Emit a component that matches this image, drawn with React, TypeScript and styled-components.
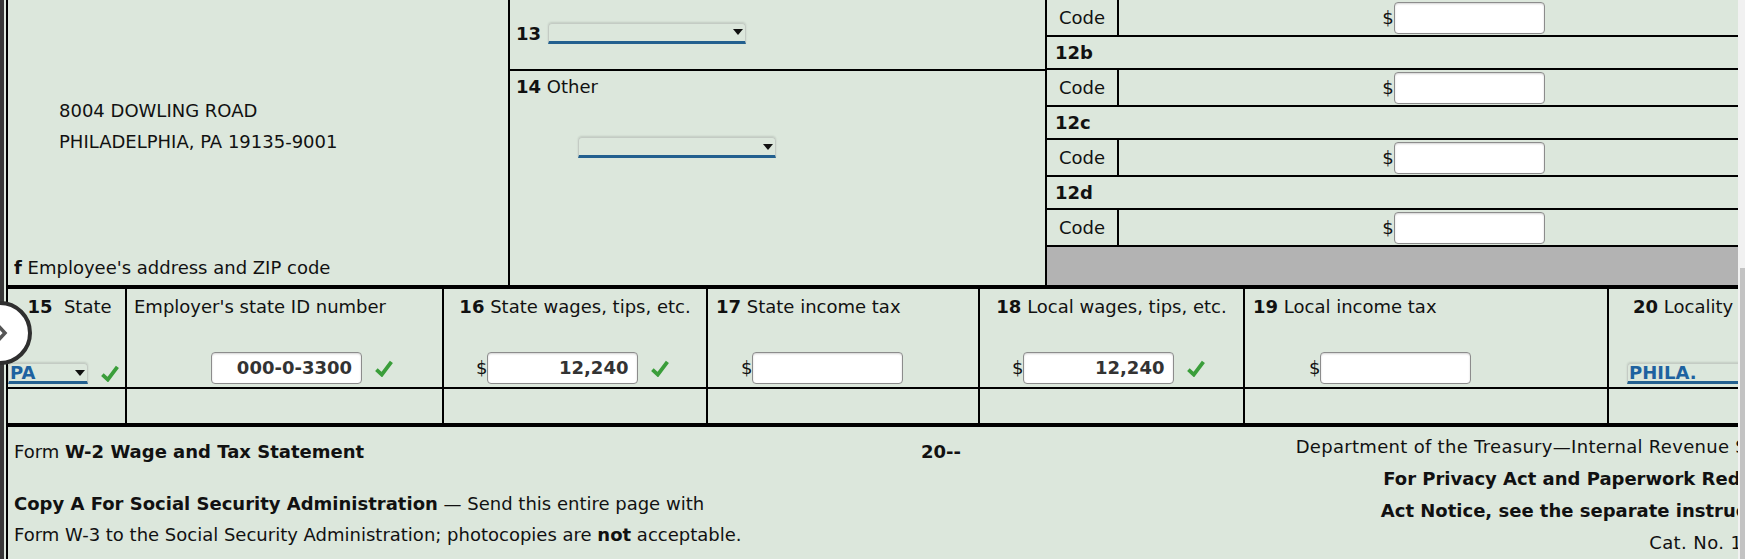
import React from 'react';
import styled, { createGlobalStyle } from 'styled-components';

const FORM_BG = '#dce7dc';
const LINE = '#000';

const GlobalStyle = createGlobalStyle`
  html, body {
    margin: 0;
    padding: 0;
    overflow: hidden;
    background: ${FORM_BG};
  }
  body {
    font-family: Verdana, "DejaVu Sans", sans-serif;
    font-size: 18px;
    color: #111;
  }
`;

const Page = styled.div`
  display: flex;
  width: max-content;
  border-left: 4px solid #383838;
  padding-left: 2px;
  background: ${FORM_BG};
`;

const Form = styled.div`
  width: 1806px;
  border-left: 2px solid ${LINE};
  display: flex;
  flex-direction: column;
`;

// ---------- top block (address / 13 / 14 / 12a-d)

const TopSection = styled.div`
  display: grid;
  grid-template-columns: 502px 537px 1fr;
  height: 285px;
  border-bottom: 4px solid ${LINE};
`;

const AddressCell = styled.div`
  display: flex;
  flex-direction: column;
  border-right: 2px solid ${LINE};
  padding: 95px 0 6px 6px;
`;

const AddressLines = styled.div`
  padding-left: 45px;
  line-height: 31px;
`;

const CellLabel = styled.div`
  margin-top: auto;
  line-height: 22px;
`;

const MiddleCell = styled.div`
  display: flex;
  flex-direction: column;
  border-right: 2px solid ${LINE};
`;

const Box13 = styled.div`
  height: 66px;
  border-bottom: 2px solid ${LINE};
  display: flex;
  align-items: center;
  gap: 7px;
  padding: 0 0 3px 6px;
`;

const Box14 = styled.div`
  flex: 1;
  padding: 5px 6px;
  line-height: 22px;
`;

const Box14Select = styled.div`
  margin: 39px 0 0 62px;
`;

const CodesCell = styled.div`
  display: flex;
  flex-direction: column;
`;

const CodeRow = styled.div`
  height: 35px;
  border-bottom: 2px solid ${LINE};
  display: grid;
  grid-template-columns: 72px 1fr;
`;

const CodeName = styled.div`
  border-right: 2px solid ${LINE};
  display: flex;
  align-items: center;
  justify-content: center;
`;

const CodeAmount = styled.div`
  display: flex;
  align-items: center;
  justify-content: center;
  padding-right: 6px;
`;

const CodeLetterRow = styled.div`
  height: 31px;
  border-bottom: 2px solid ${LINE};
  display: flex;
  align-items: center;
  padding-left: 8px;
  font-weight: bold;
`;

const Shaded = styled.div`
  flex: 1;
  background: #b3b3b3;
`;

// ---------- shared controls

const Num = styled.b`
  font-weight: bold;
`;

const SelectBox = styled.div<{ $w: number }>`
  box-sizing: border-box;
  width: ${(p) => p.$w}px;
  height: 21px;
  flex: none;
  border: 1px solid #c4cbc4;
  border-bottom: 3px solid #23608f;
  border-radius: 4px 4px 0 0;
  box-shadow: 0 -1px 2px rgba(0, 0, 0, 0.12);
  display: flex;
  align-items: center;
  padding-left: 1px;
  color: #1e62a0;
  font-weight: bold;
  line-height: 18px;
  overflow: hidden;
  white-space: nowrap;
`;

const Caret = styled.span`
  margin-left: auto;
  margin-right: 2px;
  width: 0;
  height: 0;
  border-left: 5px solid transparent;
  border-right: 5px solid transparent;
  border-top: 6px solid #111;
`;

const Dollar = styled.span`
  line-height: 32px;
`;

const TextInput = styled.div`
  box-sizing: border-box;
  width: 151px;
  height: 32px;
  flex: none;
  background: #fff;
  border: 1px solid #8c8c8c;
  border-radius: 4px;
  box-shadow: inset 0 1px 2px rgba(0, 0, 0, 0.18);
  padding-right: 9px;
  text-align: right;
  line-height: 30px;
  font-weight: bold;
  color: #333;
`;

const Check = () => (
  <svg width="18" height="17" viewBox="0 0 18 17" style={{ flex: 'none' }}>
    <polyline
      points="1.4,9.6 6.8,14.6 16.4,1.8"
      fill="none"
      stroke="#3a9e3a"
      strokeWidth="3.8"
    />
  </svg>
);

const Select = ({ w, value }: { w: number; value?: string }) => (
  <SelectBox $w={w}>
    {value}
    <Caret />
  </SelectBox>
);

const Money = ({ value }: { value?: string }) => (
  <>
    <Dollar>$</Dollar>
    <TextInput>{value}</TextInput>
  </>
);

// ---------- state / local row

const StateGrid = styled.div`
  display: grid;
  grid-template-columns: 119px 317px 264px 272px 265px 364px 1fr;
  grid-template-rows: 100px 34px;
  border-bottom: 4px solid ${LINE};
`;

const StateCell = styled.div<{ $last?: boolean; $head?: boolean }>`
  border-right: ${(p) => (p.$last ? 'none' : `2px solid ${LINE}`)};
  border-bottom: ${(p) => (p.$head ? `2px solid ${LINE}` : 'none')};
  display: flex;
  flex-direction: column;
  padding: ${(p) => (p.$head ? '8px 0 3px' : '0')};
  min-width: 0;
`;

const StateLabel = styled.div<{ $center?: boolean; $indent: number }>`
  line-height: 20px;
  white-space: nowrap;
  text-align: ${(p) => (p.$center ? 'center' : 'left')};
  padding-left: ${(p) => p.$indent}px;
`;

const Controls = styled.div<{ $indent: number }>`
  margin-top: auto;
  display: flex;
  align-items: center;
  padding-left: ${(p) => p.$indent}px;
`;

const Gap = styled.span`
  width: 13px;
  flex: none;
`;

// ---------- footer

const Footer = styled.div`
  display: grid;
  grid-template-columns: 895px 80px 1fr;
  height: 140px;
`;

const FooterLeft = styled.div`
  padding: 9px 0 0 6px;
  line-height: 31px;
`;

const CopyA = styled.div`
  margin-top: 21px;
`;

const Year = styled.div`
  padding: 9px 4px 0 0;
  line-height: 31px;
  text-align: center;
  font-weight: bold;
`;

const FooterRight = styled.div`
  padding: 4px 10px 0 0;
  line-height: 32px;
  text-align: right;
  white-space: nowrap;
`;

const Plain = styled.div<{ $spread: number }>`
  letter-spacing: ${(p) => p.$spread}px;
`;

// ---------- overlays

const SideToggle = styled.div`
  position: fixed;
  left: -32px;
  top: 301px;
  width: 64px;
  height: 64px;
  box-sizing: border-box;
  border-radius: 50%;
  background: #fff;
  border: 4px solid #2f2f2f;
  overflow: hidden;
`;

const ScrollTrack = styled.div`
  position: fixed;
  top: 0;
  right: 0;
  width: 7px;
  height: 100vh;
  background: #f1f1f1;
`;

const ScrollThumb = styled.div`
  position: absolute;
  top: 268px;
  bottom: 0;
  right: 0;
  width: 5px;
  background: #c3c3c3;
`;

const codeSlots = ['12b', '12c', '12d'];

const App = () => {
  return (
    <>
      <GlobalStyle />
      <Page>
        <Form>
          <TopSection>
            <AddressCell>
              <AddressLines>
                <div>8004 DOWLING ROAD</div>
                <div>PHILADELPHIA, PA 19135-9001</div>
              </AddressLines>
              <CellLabel>
                <Num>f</Num> Employee's address and ZIP code
              </CellLabel>
            </AddressCell>

            <MiddleCell>
              <Box13>
                <Num>13</Num>
                <Select w={198} />
              </Box13>
              <Box14>
                <div>
                  <Num>14</Num> Other
                </div>
                <Box14Select>
                  <Select w={198} />
                </Box14Select>
              </Box14>
            </MiddleCell>

            <CodesCell>
              <CodeRow>
                <CodeName>Code</CodeName>
                <CodeAmount>
                  <Money />
                </CodeAmount>
              </CodeRow>
              {codeSlots.map((slot) => (
                <React.Fragment key={slot}>
                  <CodeLetterRow>{slot}</CodeLetterRow>
                  <CodeRow>
                    <CodeName>Code</CodeName>
                    <CodeAmount>
                      <Money />
                    </CodeAmount>
                  </CodeRow>
                </React.Fragment>
              ))}
              <Shaded />
            </CodesCell>
          </TopSection>

          <StateGrid>
            <StateCell $head>
              <StateLabel $center $indent={6}>
                <Num>15</Num>&nbsp; State
              </StateLabel>
              <Controls $indent={0}>
                <Select w={80} value="PA" />
                <Gap />
                <Check />
              </Controls>
            </StateCell>
            <StateCell $head>
              <StateLabel $indent={7}>Employer's state ID number</StateLabel>
              <Controls $indent={84}>
                <TextInput>000-0-3300</TextInput>
                <Gap />
                <Check />
              </Controls>
            </StateCell>
            <StateCell $head>
              <StateLabel $center $indent={0}>
                <Num>16</Num> State wages, tips, etc.
              </StateLabel>
              <Controls $indent={32}>
                <Money value="12,240" />
                <Gap />
                <Check />
              </Controls>
            </StateCell>
            <StateCell $head>
              <StateLabel $indent={8}>
                <Num>17</Num> State income tax
              </StateLabel>
              <Controls $indent={33}>
                <Money />
              </Controls>
            </StateCell>
            <StateCell $head>
              <StateLabel $center $indent={0}>
                <Num>18</Num> Local wages, tips, etc.
              </StateLabel>
              <Controls $indent={32}>
                <Money value="12,240" />
                <Gap />
                <Check />
              </Controls>
            </StateCell>
            <StateCell $head>
              <StateLabel $indent={8}>
                <Num>19</Num> Local income tax
              </StateLabel>
              <Controls $indent={64}>
                <Money />
              </Controls>
            </StateCell>
            <StateCell $head $last>
              <StateLabel $indent={24}>
                <Num>20</Num> Locality
              </StateLabel>
              <Controls $indent={18}>
                <Select w={150} value="PHILA." />
              </Controls>
            </StateCell>

            <StateCell />
            <StateCell />
            <StateCell />
            <StateCell />
            <StateCell />
            <StateCell />
            <StateCell $last />
          </StateGrid>

          <Footer>
            <FooterLeft>
              <div>
                Form <b>W-2 Wage and Tax Statement</b>
              </div>
              <CopyA>
                <b>Copy A For Social Security Administration</b> — Send this entire page with
              </CopyA>
              <div>
                Form W-3 to the Social Security Administration; photocopies are <b>not</b> acceptable.
              </div>
            </FooterLeft>
            <Year>20--</Year>
            <FooterRight>
              <Plain $spread={0.3}>Department of the Treasury—Internal Revenue Service</Plain>
              <div>
                <b>For Privacy Act and Paperwork Reduction</b>
              </div>
              <div>
                <b>Act Notice, see the separate instructions.</b>
              </div>
              <Plain $spread={0.4}>Cat. No. 10134D</Plain>
            </FooterRight>
          </Footer>
        </Form>
      </Page>

      <SideToggle>
        <svg width="56" height="56" viewBox="0 0 56 56">
          <polyline
            points="20,14 33,28 20,42"
            fill="none"
            stroke="#555"
            strokeWidth="3.5"
          />
        </svg>
      </SideToggle>

      <ScrollTrack>
        <ScrollThumb />
      </ScrollTrack>
    </>
  );
};

export default App;
